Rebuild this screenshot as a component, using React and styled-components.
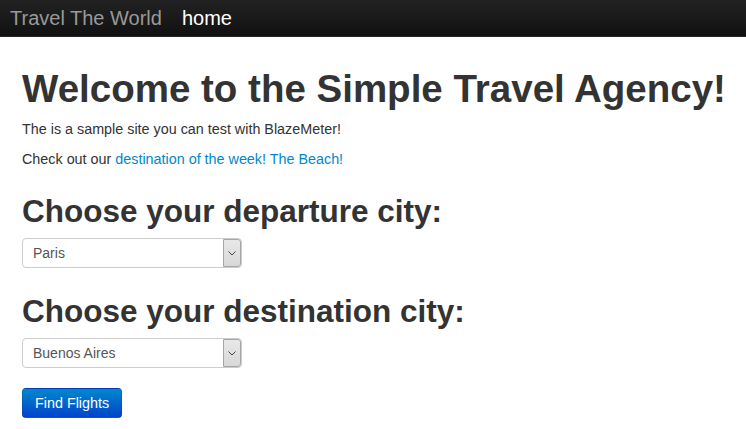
import React, { useState } from 'react'
import styled, { createGlobalStyle } from 'styled-components'

const GlobalStyle = createGlobalStyle`
    html, body {
        margin: 0;
        padding: 0;
        background: #fff;
    }
    body {
        font-family: "Liberation Sans", Arial, sans-serif;
        font-size: 14px;
        line-height: 20px;
        color: #333;
    }
`

const departures = ['Paris', 'Philadelphia', 'Boston', 'Portland', 'San Diego', 'Mexico City', 'São Paolo']
const destinations = ['Buenos Aires', 'Rome', 'London', 'Berlin', 'New York', 'Dublin', 'Cairo']

const CitySelect = ({ value, options, onChange }) => (
    <SelectWrap>
        <NativeSelect value={value} onChange={e => onChange(e.target.value)}>
            {options.map(o => <option key={o} value={o}>{o}</option>)}
        </NativeSelect>
        <Arrow aria-hidden="true">
            <svg width="8" height="5" viewBox="0 0 8 5">
                <path d="M0.5 0.5 L4 4 L7.5 0.5" fill="none" stroke="#444" strokeWidth="1" />
            </svg>
        </Arrow>
    </SelectWrap>
)

const App = () => {
    const [from, setFrom] = useState('Paris')
    const [to, setTo] = useState('Buenos Aires')

    return (
        <>
            <GlobalStyle />
            <Navbar>
                <Brand href="#">Travel The World</Brand>
                <NavLink href="#">home</NavLink>
            </Navbar>
            <Main>
                <Title>Welcome to the Simple Travel Agency!</Title>
                <Text>The is a sample site you can test with BlazeMeter!</Text>
                <Text>
                    Check out our <Link href="#">destination of the week! The Beach!</Link>
                </Text>
                <Form onSubmit={e => e.preventDefault()}>
                    <Heading>Choose your departure city:</Heading>
                    <CitySelect value={from} options={departures} onChange={setFrom} />
                    <Heading>Choose your destination city:</Heading>
                    <CitySelect value={to} options={destinations} onChange={setTo} />
                    <Button type="submit">Find Flights</Button>
                </Form>
            </Main>
        </>
    )
}

export default App


const Navbar = styled.nav`
    height: 37px;
    display: flex;
    align-items: center;
    padding: 0 10px;
    background-image: linear-gradient(to bottom, #222222, #111111);
    border-bottom: 1px solid #252525;
    box-sizing: border-box;
`

const Brand = styled.a`
    font-size: 20px;
    line-height: 20px;
    color: #999;
    text-decoration: none;
    margin-right: 20px;
`

const NavLink = styled.a`
    font-size: 20px;
    line-height: 20px;
    color: #fff;
    text-decoration: none;
`

const Main = styled.main`
    padding: 22px 22px 0;
    overflow: hidden;
`

const Title = styled.h1`
    margin: 10px 0;
    font-size: 38.5px;
    line-height: 40px;
    font-weight: bold;
    color: #333;
    white-space: nowrap;
`

const Text = styled.p`
    margin: 0 0 10px;
    font-size: 14.35px;
`

const Link = styled.a`
    color: #0088cc;
    text-decoration: none;
`

const Form = styled.form`
    margin: 22px 0 0;
`

const Heading = styled.h2`
    margin: 0 0 7px;
    font-size: 31.5px;
    line-height: 40px;
    font-weight: bold;
    color: #333;

    & + * + & {
        margin-top: 23px;
    }
`

const SelectWrap = styled.div`
    position: relative;
    width: 220px;
    height: 30px;
`

const NativeSelect = styled.select`
    appearance: none;
    width: 100%;
    height: 30px;
    margin: 0;
    padding: 0 24px 0 10px;
    border: 1px solid #ccc;
    border-radius: 4px;
    background: #fff;
    font-family: "Liberation Sans", Arial, sans-serif;
    font-size: 14px;
    color: #555;
    box-sizing: border-box;
    outline: none;
`

const Arrow = styled.span`
    position: absolute;
    top: 1px;
    right: 1px;
    bottom: 1px;
    width: 18px;
    display: flex;
    align-items: center;
    justify-content: center;
    border: 1px solid #a6a6a6;
    border-radius: 0 3px 3px 0;
    background-image: linear-gradient(to bottom, #e8e8e8, #d8d8d8);
    box-sizing: border-box;
    pointer-events: none;
`

const Button = styled.button`
    display: block;
    margin-top: 20px;
    height: 30px;
    padding: 4px 12px;
    font-family: "Liberation Sans", Arial, sans-serif;
    font-size: 14.35px;
    line-height: 20px;
    color: #fff;
    border: 1px solid #0044cc;
    border-color: rgba(0, 0, 0, 0.1) rgba(0, 0, 0, 0.1) rgba(0, 0, 0, 0.25);
    border-radius: 4px;
    background-color: #006dcc;
    background-image: linear-gradient(to bottom, #0088cc, #0044cc);
    box-sizing: border-box;
    cursor: pointer;
`
